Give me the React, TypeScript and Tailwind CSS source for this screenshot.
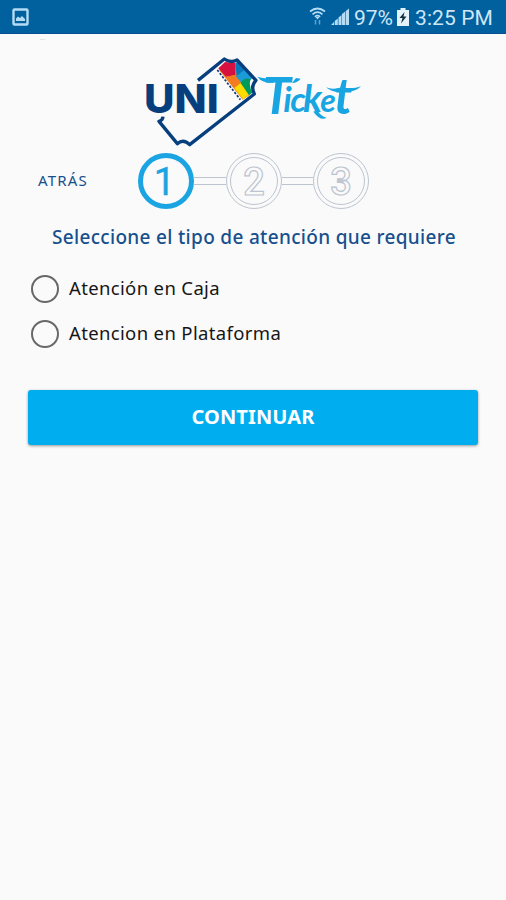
import { useState } from "react";

const OPTIONS = ["Atención en Caja", "Atencion en Plataforma"];

function StatusBar() {
  return (
    <header className="flex h-[34px] items-center border-b border-[#0a4f94] bg-[#01619f] pr-[13px] pl-[12px] text-[#cfe6f6]">
      <svg width="17" height="18" viewBox="0 0 17 18">
        <rect x="1.5" y="1.5" width="14" height="15" rx="1" fill="none" stroke="#b5dcf5" strokeWidth="2.4" />
        <path d="M4 13V10.5l2-2 2 1.500 2-2 3 3V13z" fill="#b5dcf5" />
      </svg>
      <div className="ml-auto flex items-center">
        <svg className="mr-[5px]" width="17" height="19" viewBox="0 0 17 19" fill="none" stroke="#b5dcf5">
          <path d="M1 4.500Q8.500-1.500 16 4.500" strokeWidth="1.700" />
          <path d="M3.500 7.300Q8.500 3 13.500 7.300" strokeWidth="1.600" />
          <path d="M5.800 9.800Q8.500 7.500 11.200 9.800" strokeWidth="1.500" />
          <path d="M8.500 12.500L6.500 10h4z" fill="#b5dcf5" stroke="none" />
          <path d="M6.500 13v4.500M10.500 13v4.500" strokeWidth="1.500" opacity=".55" />
        </svg>
        <svg className="mr-[5px]" width="18" height="18" viewBox="0 0 18 18" fill="#b5dcf5">
          <path d="M0 17l3-3v3zM3.700 13l3.100-2.500V17H3.700zM7.500 9.500l3-2.500v10h-3zM11 6l3.200-2.500V17H11zM14.800 3L18 .5V17h-3.200z" />
        </svg>
        <span className="w-[41px] pt-[3px] font-[Roboto] text-[21px] leading-none tracking-[-0.1px] whitespace-nowrap">
          97%
        </span>
        <svg className="mr-[6px] ml-[2px]" width="12" height="18" viewBox="0 0 12 18">
          <path d="M3.500 0h5v2H12v16H0V2h3.500z" fill="#e4f2fa" />
          <path d="M7.500 4L2.500 10h3L4 15.500 9.500 8.500H6.500z" fill="#152c3d" />
        </svg>
        <span className="pt-[3px] font-[Roboto] text-[21px] leading-none tracking-[0.1px] whitespace-nowrap">
          3:25 PM
        </span>
      </div>
    </header>
  );
}

function Logo() {
  return (
    <svg className="ml-[140px]" width="230" height="100" viewBox="0 0 690 300">
      <path d="M237 60L258 40L287 42L292 80L312 108L330 134L308 149Z" fill="#f58220" />
      <path d="M235 55L255 36L286 39V76L258 80Z" fill="#d6103f" />
      <path d="M258 80L286 74L302 100L283 114Z" fill="#f47b20" />
      <path d="M283 114L302 99L329 132L309 148Z" fill="#ffdc00" />
      <path d="M286 38L298 36L318 57L290 82Z" fill="#0878bc" />
      <path d="M318 57L341 80L333 88L306 101L288 79Z" fill="#1b9bd8" />
      <path d="M302 99Q311 81 332 87Q325 105 337 128L327 136Z" fill="#009a5b" />
      <path d="M232 60L301 149" stroke="#0b3974" strokeWidth="5" strokeDasharray="7 5" fill="none" />
      <path
        d="M174 91L253 27Q271 40 291 30L348 91Q331 108 343 132L149 284Q130 265 112 281L57 214Q68 211 69 200"
        fill="none"
        stroke="#073e7e"
        strokeWidth="10"
        strokeLinejoin="round"
      />
      <text
        x="12"
        y="189"
        textLength="224"
        lengthAdjust="spacingAndGlyphs"
        fill="#073e7e"
        fontFamily="Inter, sans-serif"
        fontWeight="800"
        fontSize="118"
      >
        UNI
      </text>
      <text
        x="368 430 451 489 541 583"
        y="193 186 186 186 186 193"
        fill="#18a5e1"
        fontFamily="Lato, sans-serif"
        fontStyle="italic"
        fontWeight="700"
      >
        <tspan fontSize="152">T</tspan>
        <tspan fontSize="104">ic</tspan>
        <tspan fontSize="114">k</tspan>
        <tspan fontSize="96">e</tspan>
        <tspan fontSize="148">t</tspan>
      </text>
      {/* brush flourishes around the word */}
      <g fill="#18a5e1">
        <path d="M352 80Q375 88 400 84V99Q365 99 352 80Z" />
        <path d="M468 84L482 86Q474 98 456 99Z" />
        <path d="M610 113Q640 118 663 109Q645 128 610 126Z" />
        <path d="M558 112Q575 120 600 113V126Q575 127 558 112Z" />
        <path d="M532 180Q542 200 560 203Q542 215 520 185Z" />
      </g>
    </svg>
  );
}

function Step({ value, active }: { value: number; active?: boolean }) {
  return (
    <div
      className={`flex size-[56px] shrink-0 items-center justify-center rounded-full ${
        active ? "border-[5px] border-[#1ba4e2]" : "border-[1.5px] border-[#bcc4d0] p-[3px]"
      }`}
    >
      <div
        className={`flex size-full items-center justify-center rounded-full ${
          active ? "" : "border-[1.5px] border-[#bcc4d0]"
        }`}
      >
        <svg className="shrink-0" width="40" height="48" viewBox="0 0 40 48">
          <text
            x={active ? 18.5 : 20}
            y="38"
            textAnchor="middle"
            fontFamily="Roboto, sans-serif"
            fontWeight={active ? 400 : 500}
            fontSize="38"
            fill={active ? "#1ba4e2" : "#fafafa"}
            stroke={active ? "#1ba4e2" : "#bcc4d0"}
            strokeWidth={active ? 0.4 : 1.2}
          >
            {value}
          </text>
        </svg>
      </div>
    </div>
  );
}

function Connector() {
  return <div className="h-[8px] w-[31.5px] shrink-0 border-y border-[#bcc4d0]" />;
}

export default function App() {
  const [selected, setSelected] = useState<string | null>(null);

  return (
    <div className="min-h-[900px] w-[506px] bg-[#fafafa] font-['Noto_Sans',sans-serif]">
      <StatusBar />
      <div className="h-[16px] pt-[5px] pl-[40px]">
        <div className="h-px w-[5px] bg-[#e0e5e5]" />
      </div>
      <Logo />

      <nav className="mt-[2px] flex h-[57px] items-center pl-[38px]">
        <button className="w-[100px] text-left text-[15px] tracking-[1.2px] text-[#17508d]">ATRÁS</button>
        <Step value={1} active />
        <Connector />
        <Step value={2} />
        <Connector />
        <Step value={3} />
      </nav>

      <h1 className="mt-[13px] pl-[52px] text-[19px] leading-[30px] font-medium tracking-[0.32px] whitespace-nowrap text-[#17508d]">
        Seleccione el tipo de atención que requiere
      </h1>

      <div className="mt-[14px] flex flex-col pl-[31px]">
        {OPTIONS.map((option) => (
          <button
            key={option}
            onClick={() => setSelected(option)}
            className="flex h-[45px] items-center gap-[10px] text-[18.5px] tracking-[0.35px] text-[#161616]"
          >
            <span className="flex size-[28px] items-center justify-center rounded-full border-[2.5px] border-[#686868]">
              {selected === option && <span className="size-3 rounded-full bg-[#00adef]" />}
            </span>
            <span className="pb-[2px]">{option}</span>
          </button>
        ))}
      </div>

      <button className="mt-[34px] ml-[28px] flex h-[55px] w-[450px] items-center justify-center rounded-[3px] bg-[#00adef] pb-[2px] text-[20px] font-bold tracking-[0.1px] text-white shadow-[0_1px_3px_rgba(0,0,0,0.4)]">
        CONTINUAR
      </button>
    </div>
  );
}
